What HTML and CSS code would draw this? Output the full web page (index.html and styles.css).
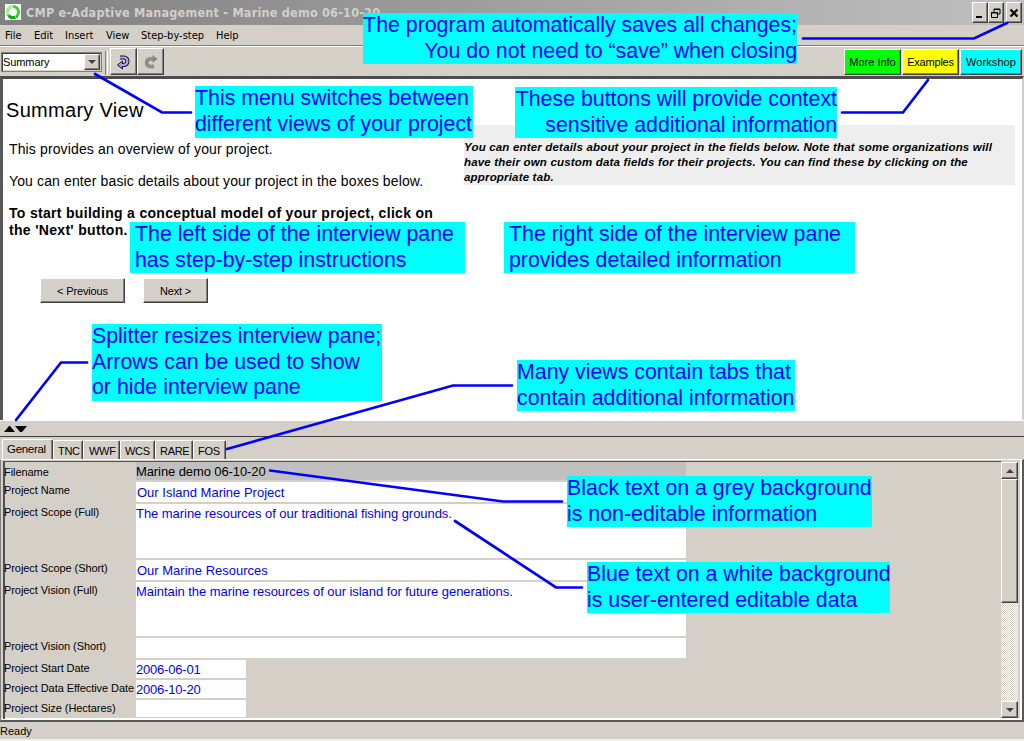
FILE: index.html
```
<!DOCTYPE html>
<html lang="en">
<head>
<meta charset="utf-8">
<title>CMP e-Adaptive Management</title>
<link rel="stylesheet" href="styles.css">
</head>
<body>
<div class="window">
  <header class="titlebar">
    <svg class="logo" width="16" height="16" viewBox="0 0 16 16"><rect width="16" height="16" fill="#fff"/><circle cx="8" cy="8" r="5.5" fill="none" stroke="#35d52a" stroke-width="3"/><path d="M8 2.5A5.500 5.500 0 0 0 3 10.500" fill="none" stroke="#a4ef91" stroke-width="3"/><path d="M4 12A5.500 5.500 0 0 0 12 12" fill="none" stroke="#12ac10" stroke-width="3"/><path d="M7 0l1 5M0 10l5-1M11 14l-1-4" stroke="#fff" stroke-width="0.700"/></svg>
    <span class="title">CMP e-Adaptive Management - Marine demo 06-10-20</span>
    <div class="controls">
      <button class="win"><svg width="14" height="18"><path d="M3 13h6" stroke="#000" stroke-width="2"/></svg></button>
      <button class="win"><svg width="14" height="18"><path d="M5 8V5h6v5H9M5 5.500h6M2.500 8.500h6v5h-6zM2 9h7" fill="none" stroke="#000"/></svg></button>
      <button class="win close"><svg width="14" height="18"><path d="M3.500 5.500l7 7m0-7l-7 7" stroke="#000" stroke-width="2.200"/></svg></button>
    </div>
  </header>
  <nav class="menu"><span class="m1">File</span><span class="m2">Edit</span><span class="m3">Insert</span><span class="m4">View</span><span class="m5">Step-by-step</span><span class="m6">Help</span></nav>
  <div class="toolbar">
    <div class="combo"><span>Summary</span><i class="drop"><svg width="12" height="12"><path d="M2 4h8L6 8z" fill="#404040"/></svg></i></div>
    <i class="separator"></i>
    <button class="tool"><svg width="18" height="20" viewBox="0 0 18 20"><path d="M5 5.500h4a4 3.800 0 0 1 0 7.500H7" fill="none" stroke="#16162c" stroke-width="4.200"/><path d="M2.500 13l5-4v8z" fill="#9999df" stroke="#16162c"/><path d="M5 5.500h4a4 3.800 0 0 1 0 7.500H6" fill="none" stroke="#a8a8ee" stroke-width="2.200"/></svg></button>
    <button class="tool"><svg width="18" height="20" viewBox="0 0 18 20"><path d="M12 7H8a4 3.800 0 0 0 0 7.500h4" fill="none" stroke="#858585" stroke-width="3.500"/><path d="M15.500 7l-5-4v8z" fill="#858585"/><path d="M11 7H8a4 3.800 0 0 0 0 7.500h3" fill="none" stroke="#a0a0a0"/></svg></button>
    <div class="links"><button class="link green">More Info</button><button class="link yellow">Examples</button><button class="link cyan">Workshop</button></div>
  </div>
  <main class="interview">
    <section class="steps">
      <h1>Summary View</h1>
      <p class="p1">This provides an overview of your project.</p>
      <p class="p2">You can enter basic details about your project in the boxes below.</p>
      <p class="strong">To start building a conceptual model of your project, click on<br>the 'Next' button.</p>
      <div class="actions"><button class="push prev">&lt; Previous</button><button class="push next">Next &gt;</button></div>
    </section>
    <aside class="note">You can enter details about your project in the fields below. Note that some organizations will<br>have their own custom data fields for their projects. You can find these by clicking on the<br>appropriate tab.</aside>
  </main>
  <div class="splitter"><svg width="28" height="8"><path d="M4 7l5-6h1l5 6zM15 1h12l-5 6h-2z" fill="#000"/></svg></div>
  <div class="tabs"><span class="tab active">General</span><span class="tab t1">TNC</span><span class="tab t2">WWF</span><span class="tab t3">WCS</span><span class="tab t4">RARE</span><span class="tab t5">FOS</span></div>
  <section class="panel">
    <div class="form">
      <div class="row r1"><label>Filename</label><div class="field gray">Marine demo 06-10-20</div></div>
      <div class="row"><label>Project Name</label><div class="field inset">Our Island Marine Project</div></div>
      <div class="row tall"><label>Project Scope (Full)</label><div class="field">The marine resources of our traditional fishing grounds.</div></div>
      <div class="row"><label>Project Scope (Short)</label><div class="field inset">Our Marine Resources</div></div>
      <div class="row tall"><label>Project Vision (Full)</label><div class="field">Maintain the marine resources of our island for future generations.</div></div>
      <div class="row"><label>Project Vision (Short)</label><div class="field"></div></div>
      <div class="row short"><label>Project Start Date</label><div class="field">2006-06-01</div></div>
      <div class="row short"><label>Project Data Effective Date</label><div class="field">2006-10-20</div></div>
      <div class="row short last"><label>Project Size (Hectares)</label><div class="field"></div></div>
    </div>
    <div class="scroll"><i class="arrow"><svg width="12" height="12"><path d="M2 8h8L6 4z" fill="#404040"/></svg></i><i class="thumb"></i><i class="track"></i><i class="arrow"><svg width="12" height="12"><path d="M2 4h8L6 8z" fill="#404040"/></svg></i></div>
  </section>
  <footer class="status">Ready</footer>

  <svg class="leaders" width="1024" height="741" viewBox="0 0 1024 741">
    <polyline points="803,38.500 974,38.500 1007,23"/>
    <polyline points="95,74 162,112.500 191,112.500"/>
    <polyline points="842,112.500 903,112.500 928,80"/>
    <polyline points="87,362.500 61,362.500 16,420"/>
    <polyline points="512,385.500 453,385.500 227,449"/>
    <polyline points="270,470.500 503,501.500 562,501.500"/>
    <polyline points="455,521 556,587.500 582,587.500"/>
  </svg>
  <div class="callout c1">The program automatically saves all changes;<br>You do not need to “save” when closing</div>
  <div class="callout c2">This menu switches between<br>different views of your project</div>
  <div class="callout c3">These buttons will provide context<br>sensitive additional information</div>
  <div class="callout c4">The left side of the interview pane<br>has step-by-step instructions</div>
  <div class="callout c5">The right side of the interview pane<br>provides detailed information</div>
  <div class="callout c6">Splitter resizes interview pane;<br>Arrows can be used to show<br>or hide interview pane</div>
  <div class="callout c7">Many views contain tabs that<br>contain additional information</div>
  <div class="callout c8">Black text on a grey background<br>is non-editable information</div>
  <div class="callout c9">Blue text on a white background<br>is user-entered editable data</div>
</div>
</body>
</html>
```
FILE: styles.css
```
* { box-sizing: border-box; }
body { margin: 0; }
.window { position: relative; width: 1024px; height: 741px; overflow: hidden; display: flex; flex-direction: column; background: #d4d0c8; font: 11px/13px "Liberation Sans", Arial, sans-serif; color: #000; }
button { font: inherit; color: inherit; padding: 0; border-radius: 0; flex: none; }
i { display: block; }
svg { display: block; flex: none; }
h1, p { margin: 0; font-weight: normal; }
.titlebar { height: 25px; flex: none; display: flex; padding: 4px 2px 0 5px; background: linear-gradient(90deg, #808080, #c0c0c0); }
.title { margin-left: 5px; flex: 1; white-space: nowrap; font: bold 12.5px/17px "DejaVu Sans Condensed", "DejaVu Sans", sans-serif; letter-spacing: .24px; color: #d4d0c8; }
.controls { display: flex; margin-top: -2px; }
.win, .tool, .drop, .arrow, .thumb { background: #d4d0c8; border: 1px solid #404040; border-top-color: #fff; border-left-color: #fff; box-shadow: inset -1px -1px #808080; }
.win { width: 16px; height: 21px; overflow: hidden; }
.close { margin-left: 2px; }
.menu { height: 22px; flex: none; display: flex; padding: 4px 0 0 5px; border-bottom: 1px solid #fff; box-shadow: inset 0 -1px #808080; font: 11px/13px "DejaVu Sans Condensed", "DejaVu Sans", sans-serif; }
.m1 { width: 29px; } .m2 { width: 31px; } .m3 { width: 41px; } .m4 { width: 35px; } .m5 { width: 75px; }
.toolbar { height: 29px; flex: none; display: flex; }
.combo { width: 101px; height: 20px; margin-top: 5px; margin-left: 1px; display: flex; background: #fff; border: 1px solid #808080; box-shadow: inset 1px 1px #404040, inset -1px -1px #d4d0c8; padding: 1px; }
.combo span { flex: 1; padding-top: 2px; font-size: 11px; letter-spacing: -.1px; }
.drop { width: 16px; height: 16px; padding: 1px; }
.separator { width: 3px; height: 24px; margin: 4px 2px 0 3px; border-left: 1px solid #808080; border-right: 1px solid #fff; }
.tool { width: 27px; height: 27px; margin-top: 1px; display: flex; align-items: center; justify-content: center; }
.links { margin-left: auto; display: flex; gap: 1px; padding: 2px 2px 0 0; }
.link { height: 26px; border: 1px solid #404040; border-top-color: #fff; border-left-color: #fff; box-shadow: inset -1px -1px #808080; }
.green { width: 57px; background: #0f0; }
.yellow { width: 57px; background: #ff0; letter-spacing: -.2px; }
.cyan { width: 62px; background: #0ff; letter-spacing: .1px; }
.interview { height: 344px; flex: none; display: flex; background: #fff; border: solid; border-width: 3px 2px 0 3px; border-color: #4c4c4c #d4d0c8 #fff #585858; white-space: nowrap; }
.steps { width: 461px; padding: 20px 0 0 4px; }
h1 { margin-left: -1px; font-size: 20px; line-height: 23px; letter-spacing: .3px; }
.steps p { font-size: 14px; line-height: 17px; padding-left: 2px; letter-spacing: .13px; }
.steps .p1 { margin-top: 19px; }
.steps .p2 { margin-top: 15px; }
.steps .strong { margin-top: 15px; font-weight: bold; letter-spacing: .31px; }
.actions { display: flex; gap: 18px; margin: 39px 0 0 33px; }
.push { height: 25px; background: #d4d0c8; border: 1px solid #404040; border-left-color: #fff; border-top-color: #fff; box-shadow: inset -1px -1px #808080; padding-top: 1px; letter-spacing: -.15px; }
.prev { width: 85px; } .next { width: 65px; }
.note { width: 551px; height: 60px; margin-top: 46px; padding-top: 15px; background: #eee; font: italic bold 11.5px/15px "Liberation Sans", Arial, sans-serif; letter-spacing: .18px; }
.splitter { height: 17px; flex: none; padding-top: 4px; border-top: 1px solid #fff; border-bottom: 1px solid #404040; }
.tabs { height: 22px; flex: none; display: flex; align-items: flex-end; padding-left: 2px; }
.tab { height: 19px; padding: 4px 0 0 4px; border: 1px solid #fff; border-right: 1px solid #404040; border-bottom: 0; border-radius: 2px 2px 0 0; box-shadow: inset -1px 0 #808080; letter-spacing: -.3px; }
.tab.active { width: 51px; height: 20px; padding-top: 3px; font-size: 11.5px; letter-spacing: -.3px; }
.t1 { width: 30px; } .t2 { width: 37px; padding-left: 5px; } .t3 { width: 35px; } .t4 { width: 38px; } .t5 { width: 33px; }
.panel { height: 263px; flex: none; display: flex; padding: 1px 2px 1px 2px; border: solid; border-width: 1px 2px 2px 1px; border-color: #fff #585858 #585858 #808080; box-shadow: inset 0 -2px #fff, inset -2px 0 #fff; }
.form { flex: 1; border: solid #505050; border-width: 1px 0 0 2px; }
.row { display: flex; margin-bottom: 2px; height: 20px; }
.row label { width: 132px; padding-top: 2px; white-space: nowrap; margin-left: -1px; letter-spacing: -.07px; }
.field { width: 550px; background: #fff; color: #00f; font-size: 13px; line-height: 16px; padding: 2px 0; white-space: nowrap; letter-spacing: -.05px; }
.row .gray { background: #c0c0c0; color: #000; letter-spacing: -.1px; }
.row .inset { padding: 3px 1px; letter-spacing: 0; }
.r1 { height: 18px; } .r1 label { padding-top: 4px; }
.tall { height: 54px; }
.short { height: 18px; }
.short .field { width: 110px; letter-spacing: -.2px; }
.last { height: 17px; margin: 0; }
.scroll { width: 17px; margin: 1px 2px 1px 0; display: flex; flex-direction: column; }
.arrow { height: 17px; padding: 2px; }
.thumb { height: 124px; }
.track { flex: 1; background: repeating-conic-gradient(#fff 0 25%, #d4d0c8 0 50%) 0 0 / 2px 2px; }
.status { flex: 1; padding-top: 3px; border-bottom: 2px solid #f2f0ec; }
.leaders { position: absolute; inset: 0; fill: none; stroke: #00f; stroke-width: 2.700; stroke-linecap: round; }
.callout { position: absolute; background: #0ff; color: #00f; font-size: 21.330px; line-height: 25.500px; white-space: nowrap; }
.c1 { left: 363px; top: 13px; width: 434px; height: 51px; text-align: right; }
.c2 { left: 195px; top: 86px; width: 278px; height: 52px; }
.c3 { left: 515px; top: 87px; width: 322px; height: 51px; text-align: right; }
.c4 { left: 130px; top: 222px; width: 335px; height: 51px; padding-left: 5px; }
.c5 { left: 504px; top: 222px; width: 351px; height: 51px; padding-left: 5px; }
.c6 { left: 92px; top: 324px; width: 290px; height: 77px; }
.c7 { left: 517px; top: 360px; width: 278px; height: 51px; }
.c8 { left: 567px; top: 476px; width: 305px; height: 51px; }
.c9 { left: 587px; top: 562px; width: 303px; height: 51px; }
```
